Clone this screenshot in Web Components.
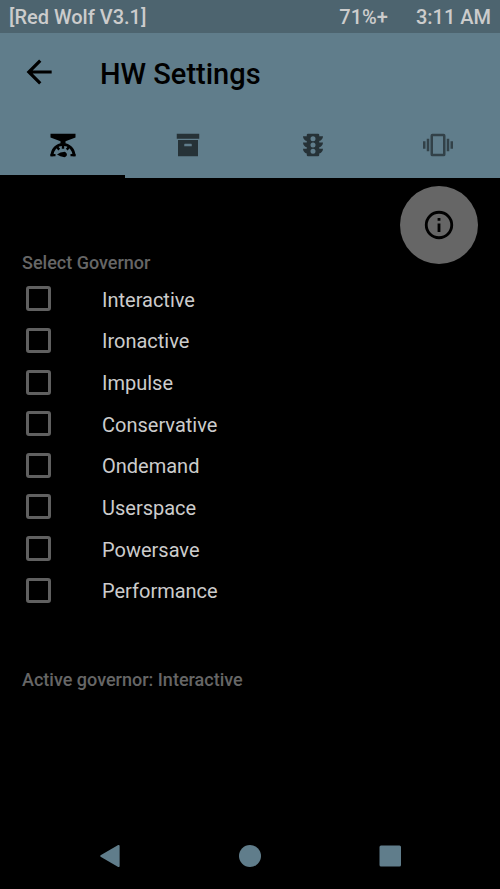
<!DOCTYPE html>
<html lang="en">
<head>
<meta charset="utf-8">
<meta name="viewport" content="width=device-width, initial-scale=1">
<title>HW Settings</title>
<style>
  html { height: 100%; background: #000; }
  body { margin: 0; min-height: 100%; display: grid; font-family: Roboto, "Liberation Sans", sans-serif; }
</style>
</head>
<body>
<hw-app></hw-app>
<script>
const define = (name, html, setup) => customElements.define(name, class extends HTMLElement {
  connectedCallback() {
    if (this.shadowRoot) return;
    const root = this.attachShadow({ mode: 'open' });
    root.innerHTML = html;
    if (setup) setup(this, root);
  }
});

const icons = {
  back: '<path d="M20,11V13H8L13.5,18.5L12.08,19.92L4.16,12L12.08,4.08L13.5,5.5L8,11H20Z"/>',
  scale: '<path d="M2,3H22V6L14,9V11H10V9L2,6Z"/><path d="M3.1,21C3.1,15.6 7,11.4 12,11.4S20.9,15.6 20.9,21" fill="none" stroke="currentColor" stroke-width="2.2"/><path d="M12,12V15M7.2,13.6L9,15.7M16.8,13.6L15,15.7M2,20.1H6M22,20.1H18" fill="none" stroke="currentColor" stroke-width="1.9"/><path d="M7.2,19.5Q10.2,17.6 12.4,17.6A2.1,2.1 0 1,1 12.4,21.6Q10,21.2 7.2,19.5Z"/>',
  archive: '<path d="M3,3H21V7H3V3M4,8H20V21H4V8M9.5,11A0.5,0.5 0 0,0 9,11.5V13H15V11.5A0.5,0.5 0 0,0 14.5,11H9.5Z"/>',
  traffic: '<path d="M12,9A2,2 0 1,1 12,5A2,2 0 1,1 12,9M12,14A2,2 0 1,1 12,10A2,2 0 1,1 12,14M12,19A2,2 0 1,1 12,15A2,2 0 1,1 12,19M20,10H17V8.86C18.72,8.41 20,6.86 20,5H17V4A1,1 0 0,0 16,3H8A1,1 0 0,0 7,4V5H4C4,6.86 5.28,8.41 7,8.86V10H4C4,11.86 5.28,13.41 7,13.86V15H4C4,16.86 5.28,18.41 7,18.86V20A1,1 0 0,0 8,21H16A1,1 0 0,0 17,20V18.86C18.72,18.41 20,16.86 20,15H17V13.86C18.72,13.41 20,11.86 20,10Z" fill-rule="evenodd"/>',
  vibrate: '<path d="M16,19H8V5H16V19M16.5,3H7.5A1.5,1.5 0 0,0 6,4.5V19.5A1.5,1.5 0 0,0 7.5,21H16.5A1.5,1.5 0 0,0 18,19.5V4.5A1.5,1.5 0 0,0 16.5,3M19,17H21V7H19V17M22,15H24V9H22V15M3,17H5V7H3V17M0,15H2V9H0V15Z" fill-rule="evenodd" opacity=".8"/>',
  info: '<path d="M11,9H13V7H11M12,20A8,8 0 1,1 12,4A8,8 0 1,1 12,20M12,2A10,10 0 1,0 12,22A10,10 0 1,0 12,2M11,17H13V11H11V17Z"/>',
  navback: '<path d="M2.6,11.2L20.2,1.1Q21.6,.5 21.6,2V22Q21.6,23.5 20.2,22.9L2.6,12.8Q1.6,12 2.6,11.2Z"/>',
  home: '<circle cx="12" cy="12" r="11"/>',
  recent: '<rect x="1.5" y="1.5" width="21.5" height="21" rx="1.5"/>'
};

define('hw-icon', `<style>
  :host { display: block; width: var(--icon, 30px); height: var(--icon, 30px); }
  svg { display: block; width: 100%; height: 100%; fill: currentColor; overflow: visible; }
</style><svg viewBox="0 0 24 24" aria-hidden="true"></svg>`,
(el, root) => { root.querySelector('svg').innerHTML = icons[el.getAttribute('name')]; });

define('hw-status', `<style>
  :host { display: flex; align-items: center; gap: 28px; height: 33px; padding: 0 9px;
    background: #4d646f; color: #ccc; font-size: 20px; font-weight: 500; line-height: 24px; }
  .name { margin-right: auto; }
</style><span class="name"><slot name="device"></slot></span><slot></slot>`);

define('hw-tab', `<style>
  :host { display: block; }
  button { display: grid; justify-items: center; align-content: center; width: 100%; height: 68px; margin: 0; padding: 4px 0 0;
    border: 0; border-bottom: 3px solid transparent; background: none; color: rgba(0,0,0,.6); }
  button[aria-selected=true] { color: #000; border-bottom-color: #000; }
</style><button role="tab"><slot></slot></button>`,
(el, root) => {
  const b = root.querySelector('button');
  b.setAttribute('aria-label', el.getAttribute('label'));
  b.setAttribute('aria-selected', el.hasAttribute('selected'));
});

define('hw-header', `<style>
  :host { display: block; background: #607d8b; color: #000; }
  .bar { display: flex; align-items: center; gap: 42px; height: 77px; padding: 0 20px; }
  button { margin: 0; padding: 0; border: 0; background: none; color: inherit; --icon: 38px; }
  h1 { margin: 0; font-size: 29px; line-height: 36px; font-weight: 500; padding-top: 4px; }
  .tabs { display: grid; grid-template-columns: repeat(4, 1fr); }
</style>
<div class="bar"><button aria-label="Back"><hw-icon name="back"></hw-icon></button><h1><slot></slot></h1></div>
<div class="tabs" role="tablist"><slot name="tab"></slot></div>`);

define('hw-fab', `<style>
  :host { display: block; }
  button { display: grid; place-items: center; width: 78px; height: 78px; margin: 0; padding: 0; border: 0;
    border-radius: 50%; background: #666; color: #000; --icon: 34px; }
</style><button aria-label="Information"><hw-icon name="info"></hw-icon></button>`);

define('hw-option', `<style>
  :host { display: block; }
  label { display: flex; align-items: center; gap: 51px; height: 100%; color: #ccc; font-size: 20px; line-height: 28px; }
  input { appearance: none; width: 25px; height: 25px; margin: 0; border: 3px solid #606060; border-radius: 3px; background: transparent; }
  input:checked { background: #607d8b; }
  span { padding-top: 2px; }
</style><label><input type="checkbox"><span><slot></slot></span></label>`);

define('hw-options', `<style>
  :host { display: block; padding: 0 22px; color: #666; font-size: 18px; line-height: 24px; font-weight: 500; }
  fieldset { margin: 0; padding: 0; border: 0; min-width: 0; }
  legend { padding: 0; margin-bottom: 3px; }
  .list { display: grid; grid-auto-rows: 1fr; min-height: 333px; padding-left: 4px; font-weight: 400; }
  p { margin: 57px 0 0; }
</style><fieldset><legend><slot name="title"></slot></legend><div class="list"><slot></slot></div></fieldset><p><slot name="active"></slot></p>`);

define('hw-nav', `<style>
  :host { display: grid; grid-template-columns: repeat(3, 1fr); height: 67px; padding: 0 8%; --icon: 24px; }
  button { display: grid; place-items: center; margin: 0; padding: 0; border: 0; background: none; color: #607d8b; }
</style>
<button aria-label="Back"><hw-icon name="navback"></hw-icon></button>
<button aria-label="Home"><hw-icon name="home"></hw-icon></button>
<button aria-label="Recent apps"><hw-icon name="recent"></hw-icon></button>`);

define('hw-app', `<style>
  :host { display: flex; flex-direction: column; background: #000; }
  main { flex: 1; }
  .action { display: flex; justify-content: flex-end; padding: 8px 22px 0; margin-bottom: -13px; }
</style>
<hw-status><span slot="device">[Red Wolf V3.1]</span><span>71%+</span><span>3:11 AM</span></hw-status>
<hw-header>HW Settings
  <hw-tab slot="tab" label="Governor" selected><hw-icon name="scale"></hw-icon></hw-tab>
  <hw-tab slot="tab" label="Storage"><hw-icon name="archive"></hw-icon></hw-tab>
  <hw-tab slot="tab" label="Control"><hw-icon name="traffic"></hw-icon></hw-tab>
  <hw-tab slot="tab" label="Vibration"><hw-icon name="vibrate"></hw-icon></hw-tab>
</hw-header>
<main>
  <div class="action"><hw-fab></hw-fab></div>
  <hw-options>
    <span slot="title">Select Governor</span>
    <hw-option>Interactive</hw-option>
    <hw-option>Ironactive</hw-option>
    <hw-option>Impulse</hw-option>
    <hw-option>Conservative</hw-option>
    <hw-option>Ondemand</hw-option>
    <hw-option>Userspace</hw-option>
    <hw-option>Powersave</hw-option>
    <hw-option>Performance</hw-option>
    <span slot="active">Active governor: Interactive</span>
  </hw-options>
</main>
<hw-nav></hw-nav>`);
</script>
</body>
</html>
